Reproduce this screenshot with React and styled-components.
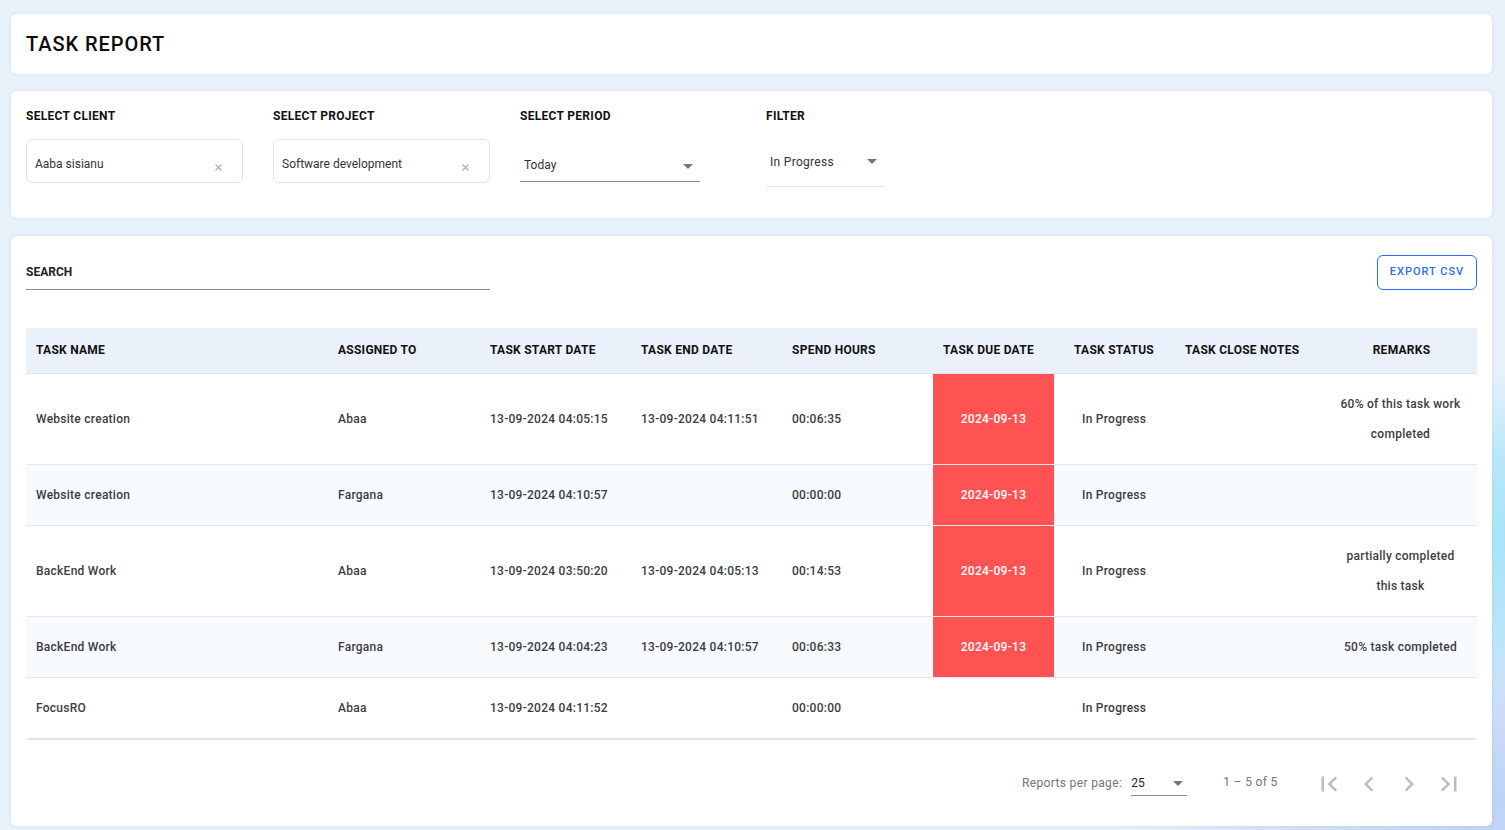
import React from "react";
import styled, { createGlobalStyle } from "styled-components";

const Global = createGlobalStyle`
  html, body { margin: 0; padding: 0; height: 830px; overflow: hidden; }
  body {
    font-family: Roboto, "Liberation Sans", sans-serif;
    background-color: #e9f1fb;
    background-image:
      radial-gradient(ellipse 70px 170px at 100% 540px, #a6e3f8 0%, rgba(170, 228, 248, 0.75) 50%, rgba(200, 230, 250, 0) 100%),
      radial-gradient(ellipse 400px 240px at 100% 800px, #bcd2f6 0%, rgba(190, 212, 246, 0.6) 45%, rgba(233, 241, 251, 0) 100%);
  }
  * { box-sizing: border-box; }
`;

const Page = styled.div`
  display: flex;
  flex-direction: column;
  gap: 17px;
  padding: 14px 13px 0 11px;
`;

const Card = styled.section`
  background: #fff;
  border-radius: 6px;
  box-shadow: 0 0 4px rgba(120, 140, 180, 0.18);
`;

const TitleCard = styled(Card)`
  height: 60px;
  padding: 0 15px;
  display: flex;
  align-items: center;
`;

const Title = styled.h1`
  margin: 0;
  font-size: 20px;
  font-weight: 500;
  letter-spacing: 0.95px;
  color: #0b0b0b;
`;

const FilterCard = styled(Card)`
  height: 127px;
  margin-bottom: 1px;
  padding: 18px 15px 0;
  display: flex;
`;

const Field = styled.div`
  width: 247px;
  &:nth-child(3) { width: 246px; }
  &:last-child { width: 120px; }
`;

const Label = styled.div`
  font-size: 12px;
  line-height: 14px;
  font-weight: 700;
  letter-spacing: 0.3px;
  color: #111;
`;

const OutlineBox = styled.div`
  margin-top: 16px;
  width: 217px;
  height: 44px;
  border: 1px solid #e2e3e6;
  border-radius: 6px;
  padding: 6px 8px 0;
  display: flex;
  align-items: center;
  justify-content: space-between;
  font-size: 12px;
  color: #333;
`;

const Clear = styled.svg`
  width: 7px;
  height: 7px;
  margin: 7px 12px 0 0;
  stroke: #a9adb5;
  stroke-width: 1.2;
  fill: none;
`;

const SelectLine = styled.div`
  margin: ${(p) => p.$top}px 0 0 ${(p) => p.$left || 0}px;
  width: ${(p) => p.$width}px;
  height: ${(p) => p.$height}px;
  border-bottom: 1px solid ${(p) => p.$line};
  padding: ${(p) => p.$pad};
  display: flex;
  align-items: flex-start;
  justify-content: space-between;
  font-size: 12px;
  line-height: 14px;
  color: ${(p) => p.$color || "#333"};
  letter-spacing: ${(p) => p.$spacing || "0"};
`;

const Caret = styled.span`
  width: 0;
  height: 0;
  margin-top: ${(p) => p.$top || 5}px;
  border-left: 5px solid transparent;
  border-right: 5px solid transparent;
  border-top: 5px solid #757575;
`;

const TableCard = styled(Card)`
  height: 590px;
  padding: 19px 15px 0;
`;

const SearchRow = styled.div`
  display: flex;
  justify-content: space-between;
  align-items: flex-start;
  height: 73px;
`;

const Search = styled.label`
  display: block;
  width: 464px;
  height: 35px;
  padding-top: 10px;
  border-bottom: 1px solid #8b8b8b;
  font-size: 12px;
  line-height: 14px;
  font-weight: 700;
  color: #222;
`;

const ExportButton = styled.button`
  width: 100px;
  height: 35px;
  padding: 0 0 2px;
  background: #fff;
  border: 1px solid #2b6cf0;
  border-radius: 6px;
  color: #2b6cf0;
  font: 500 11px Roboto, sans-serif;
  letter-spacing: 1px;
`;

const TableWrap = styled.div`
  border-bottom: 2px solid #e0e1e3;
  border-radius: 0 0 4px 4px;
`;

const Table = styled.table`
  width: 1451px;
  table-layout: fixed;
  border-collapse: collapse;
`;

const Col = styled.col`
  width: ${(p) => p.$w}px;
`;

const Th = styled.th`
  height: 45px;
  padding: ${(p) => (p.$status ? "0 0 0 20px" : "0 10px")};
  background: #eaf1fb;
  border-bottom: 1px solid #dfe3ea;
  font-size: 12px;
  font-weight: 700;
  letter-spacing: 0.26px;
  color: #111;
  white-space: nowrap;
  text-align: ${(p) => (p.$center ? "center" : "left")};
`;

const Tr = styled.tr`
  background: ${(p) => (p.$alt ? "#f7faff" : "#fff")};
  height: ${(p) => p.$h}px;
`;

const Td = styled.td`
  padding: 0 10px;
  border-bottom: 1px solid #e6e8ee;
  font-size: 12px;
  font-weight: 500;
  color: #3b3d42;
  white-space: nowrap;
  letter-spacing: 0.26px;
  tr:last-child & { border-bottom: 0; }
`;

const DueTd = styled(Td)`
  background: ${(p) => (p.$late ? "#ff5252" : "transparent")};
  color: #fff;
  text-align: center;
  padding: 0;
  letter-spacing: 0.3px;
`;

const StatusTd = styled(Td)`
  padding-left: 28px;
`;

const RemarkTd = styled(Td)`
  text-align: center;
  white-space: normal;
  line-height: 30px;
  padding: 0 16px 0 14px;
`;

const Pager = styled.footer`
  display: flex;
  align-items: flex-start;
  height: 85px;
  padding: 36px 0 0 996px;
  font-size: 12px;
  color: #757575;
`;

const PerPage = styled.span`
  line-height: 14px;
  letter-spacing: 0.35px;
`;

const PagerRange = styled.span`
  margin: -1px 0 0 36px;
  line-height: 14px;
  letter-spacing: 0.35px;
`;

const PagerIcons = styled.div`
  display: flex;
  gap: 10px;
  margin: -7px 0 0 36px;
`;

const PagerIcon = styled.svg`
  width: 30px;
  height: 30px;
  fill: #bdbdbd;
`;

const rows = [
  { n: "Website creation", a: "Abaa", s: "13-09-2024 04:05:15", e: "13-09-2024 04:11:51", h: "00:06:35", d: "2024-09-13", r: "60% of this task work completed", rh: 91 },
  { n: "Website creation", a: "Fargana", s: "13-09-2024 04:10:57", e: "", h: "00:00:00", d: "2024-09-13", r: "", rh: 61 },
  { n: "BackEnd Work", a: "Abaa", s: "13-09-2024 03:50:20", e: "13-09-2024 04:05:13", h: "00:14:53", d: "2024-09-13", r: "partially completed this task", rh: 91 },
  { n: "BackEnd Work", a: "Fargana", s: "13-09-2024 04:04:23", e: "13-09-2024 04:10:57", h: "00:06:33", d: "2024-09-13", r: "50% task completed", rh: 61 },
  { n: "FocusRO", a: "Abaa", s: "13-09-2024 04:11:52", e: "", h: "00:00:00", d: "", r: "", rh: 61 },
];

const widths = [302, 152, 151, 151, 151, 121, 121, 151, 151];
const heads = ["TASK NAME", "ASSIGNED TO", "TASK START DATE", "TASK END DATE", "SPEND HOURS", "TASK DUE DATE", "TASK STATUS", "TASK CLOSE NOTES", "REMARKS"];

export default function App() {
  return (
    <Page>
      <Global />
      <TitleCard><Title>TASK REPORT</Title></TitleCard>
      <FilterCard>
        <Field>
          <Label>SELECT CLIENT</Label>
          <OutlineBox>Aaba sisianu<Clear viewBox="0 0 7 7"><path d="M.5.5l6 6M6.5.5l-6 6" /></Clear></OutlineBox>
        </Field>
        <Field>
          <Label>SELECT PROJECT</Label>
          <OutlineBox>Software development<Clear viewBox="0 0 7 7"><path d="M.5.5l6 6M6.5.5l-6 6" /></Clear></OutlineBox>
        </Field>
        <Field>
          <Label>SELECT PERIOD</Label>
          <SelectLine $top={34} $width={180} $height={25} $line="#8b8b8b" $pad="1px 7px 0 4px">Today<Caret $top={6} /></SelectLine>
        </Field>
        <Field>
          <Label>FILTER</Label>
          <SelectLine $top={32} $width={119} $height={32} $line="#e2e3e6" $pad="0 8px 0 4px" $spacing="0.3px">In Progress<Caret $top={4} /></SelectLine>
        </Field>
      </FilterCard>
      <TableCard>
        <SearchRow>
          <Search>SEARCH</Search>
          <ExportButton>EXPORT CSV</ExportButton>
        </SearchRow>
        <TableWrap>
          <Table>
            <colgroup>{widths.map((w, i) => <Col key={i} $w={w} />)}</colgroup>
            <thead>
              <tr>{heads.map((h, i) => <Th key={h} $center={i === 8} $status={i === 6}>{h}</Th>)}</tr>
            </thead>
            <tbody>
              {rows.map((r, i) => (
                <Tr key={i} $alt={i % 2 === 1} $h={r.rh}>
                  <Td>{r.n}</Td>
                  <Td>{r.a}</Td>
                  <Td>{r.s}</Td>
                  <Td>{r.e}</Td>
                  <Td>{r.h}</Td>
                  <DueTd $late={!!r.d}>{r.d}</DueTd>
                  <StatusTd>In Progress</StatusTd>
                  <Td />
                  <RemarkTd>{r.r}</RemarkTd>
                </Tr>
              ))}
            </tbody>
          </Table>
        </TableWrap>
        <Pager>
          <PerPage>Reports per page:</PerPage>
          <SelectLine $top={0} $left={9} $width={56} $height={20} $line="#8b8b8b" $pad="0 4px 0 0" $color="#222">25<Caret $top={5} /></SelectLine>
          <PagerRange>1 – 5 of 5</PagerRange>
          <PagerIcons>
            <PagerIcon viewBox="0 0 24 24"><path d="M18.41 16.59 13.82 12l4.59-4.59L17 6l-6 6 6 6zM6 6h2v12H6z" /></PagerIcon>
            <PagerIcon viewBox="0 0 24 24"><path d="M15.41 7.41 14 6l-6 6 6 6 1.41-1.41L10.83 12z" /></PagerIcon>
            <PagerIcon viewBox="0 0 24 24"><path d="M10 6 8.59 7.41 13.17 12l-4.58 4.59L10 18l6-6z" /></PagerIcon>
            <PagerIcon viewBox="0 0 24 24"><path d="M5.59 7.41 10.18 12l-4.59 4.59L7 18l6-6-6-6zM16 6h2v12h-2z" /></PagerIcon>
          </PagerIcons>
        </Pager>
      </TableCard>
    </Page>
  );
}
